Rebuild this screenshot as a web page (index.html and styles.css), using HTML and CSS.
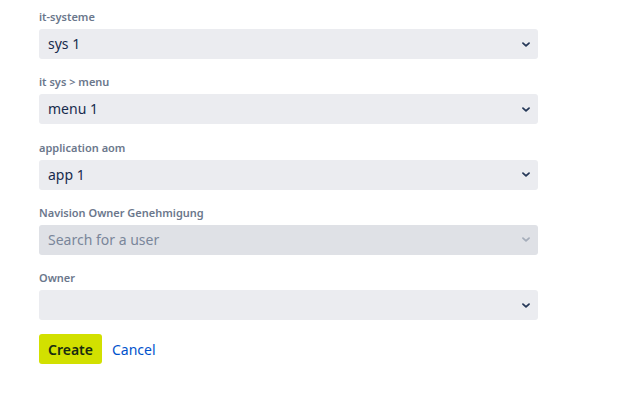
FILE: index.html
```html
<!DOCTYPE html>
<html>
<head>
<meta charset="utf-8">
<link rel="stylesheet" href="styles.css">
</head>
<body>
<form class="form">
  <div class="field">
    <label class="label">it-systeme</label>
    <div class="select"><span class="value">sys 1</span><svg class="chev" viewBox="0 0 10 6" width="8" height="5"><path d="M1.2 1.2l3.8 3.6 3.8-3.6" fill="none" stroke="#253858" stroke-width="2.2" stroke-linecap="round" stroke-linejoin="round"/></svg></div>
  </div>
  <div class="field">
    <label class="label">it sys &gt; menu</label>
    <div class="select"><span class="value">menu 1</span><svg class="chev" viewBox="0 0 10 6" width="8" height="5"><path d="M1.2 1.2l3.8 3.6 3.8-3.6" fill="none" stroke="#253858" stroke-width="2.2" stroke-linecap="round" stroke-linejoin="round"/></svg></div>
  </div>
  <div class="field">
    <label class="label">application aom</label>
    <div class="select"><span class="value">app 1</span><svg class="chev" viewBox="0 0 10 6" width="8" height="5"><path d="M1.2 1.2l3.8 3.6 3.8-3.6" fill="none" stroke="#253858" stroke-width="2.2" stroke-linecap="round" stroke-linejoin="round"/></svg></div>
  </div>
  <div class="field">
    <label class="label">Navision Owner Genehmigung</label>
    <div class="select disabled"><span class="value placeholder">Search for a user</span><svg class="chev" viewBox="0 0 10 6" width="8" height="5"><path d="M1.2 1.2l3.8 3.6 3.8-3.6" fill="none" stroke="#a5adba" stroke-width="2.2" stroke-linecap="round" stroke-linejoin="round"/></svg></div>
  </div>
  <div class="field">
    <label class="label">Owner</label>
    <div class="select"><span class="value"></span><svg class="chev" viewBox="0 0 10 6" width="8" height="5"><path d="M1.2 1.2l3.8 3.6 3.8-3.6" fill="none" stroke="#253858" stroke-width="2.2" stroke-linecap="round" stroke-linejoin="round"/></svg></div>
  </div>
  <div class="actions">
    <button type="button" class="btn-create">Create</button>
    <a class="btn-cancel">Cancel</a>
  </div>
</form>
</body>
</html>
```
FILE: styles.css
```css
html, body {
  margin: 0;
  padding: 0;
  background: #ffffff;
  font-family: "Noto Sans", "Open Sans", sans-serif;
}
.form {
  padding: 9px 0 0 39px;
  width: 499px;
}
.field {
  display: flex;
  flex-direction: column;
}
.label {
  font-size: 11px;
  font-weight: 600;
  color: #6b778c;
  line-height: 15px;
  height: 16px;
  margin-bottom: 4px;
}
.select {
  height: 30px;
  background: #ebecf0;
  border-radius: 3px;
  display: flex;
  align-items: center;
  justify-content: space-between;
  padding: 0 8px 0 9px;
  box-sizing: border-box;
  margin-bottom: 15.3px;
}
.select.disabled {
  background: #dfe1e6;
}
.value {
  font-size: 14px;
  color: #172b4d;
  line-height: 20px;
}
.value.placeholder {
  color: #7a869a;
}
.chev {
  display: block;
}
.actions {
  display: flex;
  align-items: center;
  gap: 10px;
  margin-top: -1px;
}
.btn-create {
  height: 30px;
  width: 63px;
  border: none;
  border-radius: 3px;
  background: #d2e000;
  color: #172b10;
  font-family: inherit;
  font-size: 14px;
  font-weight: 600;
  padding: 0;
}
.btn-cancel {
  color: #0052cc;
  font-size: 14px;
}
```
